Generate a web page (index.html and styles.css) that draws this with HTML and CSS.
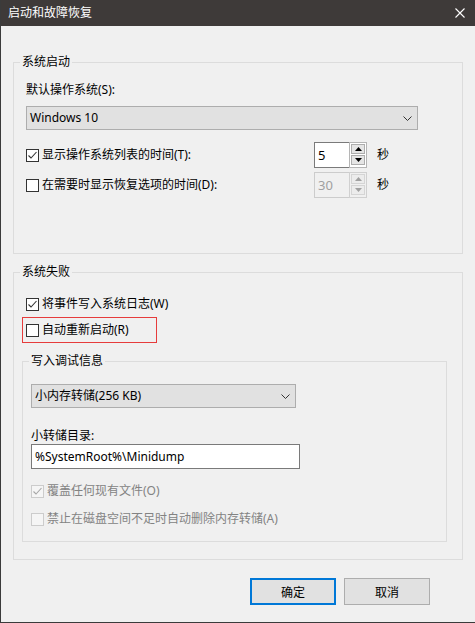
FILE: index.html
```html
<!DOCTYPE html>
<html lang="zh-CN">
<head>
<meta charset="utf-8">
<title>启动和故障恢复</title>
<link rel="stylesheet" href="styles.css">
</head>
<body>
<div class="window">
  <div class="titlebar">
    <span class="title">启动和故障恢复</span>
    <svg class="close" width="10" height="10" viewBox="0 0 10 10"><path d="M0.5 0.5 L9.5 9.5 M9.5 0.5 L0.5 9.5" stroke="#fff" stroke-width="1.1" fill="none"/></svg>
  </div>
  <div class="content">
    <fieldset class="group group-startup">
      <legend class="legend legend-wide">系统启动</legend>
      <div class="label">默认操作系统(S):</div>
      <div class="select select-os">
        <span>Windows 10</span>
        <svg class="chev" width="9" height="5" viewBox="0 0 9 5"><path d="M0.5 0.5 L4.5 4.5 L8.5 0.5" stroke="#333" stroke-width="1" fill="none"/></svg>
      </div>
      <div class="spin-row">
        <div class="check-row">
          <span class="cb"><svg width="11" height="11" viewBox="0 0 11 11"><path d="M1.5 5.5 L4 8 L9.5 2" stroke="#333" stroke-width="1.1" fill="none"/></svg></span>
          <span>显示操作系统列表的时间(T):</span>
        </div>
        <div class="spin">
          <div class="spin-field">5</div>
          <div class="spin-btns">
            <span class="spin-btn"><svg width="7" height="4" viewBox="0 0 7 4"><path d="M0 4 L3.5 0 L7 4 Z" fill="#000"/></svg></span>
            <span class="spin-btn"><svg width="7" height="4" viewBox="0 0 7 4"><path d="M0 0 L7 0 L3.5 4 Z" fill="#000"/></svg></span>
          </div>
        </div>
        <span>秒</span>
      </div>
      <div class="spin-row spin-row-second">
        <div class="check-row">
          <span class="cb"></span>
          <span>在需要时显示恢复选项的时间(D):</span>
        </div>
        <div class="spin spin-disabled">
          <div class="spin-field">30</div>
          <div class="spin-btns">
            <span class="spin-btn"><svg width="7" height="4" viewBox="0 0 7 4"><path d="M0 4 L3.5 0 L7 4 Z" fill="#a0a0a0"/></svg></span>
            <span class="spin-btn"><svg width="7" height="4" viewBox="0 0 7 4"><path d="M0 0 L7 0 L3.5 4 Z" fill="#a0a0a0"/></svg></span>
          </div>
        </div>
        <span>秒</span>
      </div>
    </fieldset>

    <fieldset class="group group-failure">
      <legend class="legend">系统失败</legend>
      <div class="check-row indent">
        <span class="cb"><svg width="11" height="11" viewBox="0 0 11 11"><path d="M1.5 5.5 L4 8 L9.5 2" stroke="#333" stroke-width="1.1" fill="none"/></svg></span>
        <span>将事件写入系统日志(W)</span>
      </div>
      <div class="highlight">
        <div class="check-row">
          <span class="cb"></span>
          <span>自动重新启动(R)</span>
        </div>
      </div>
      <fieldset class="group group-debug">
        <legend class="legend">写入调试信息</legend>
        <div class="select select-dump">
          <span>小内存转储(256 KB)</span>
          <svg class="chev" width="9" height="5" viewBox="0 0 9 5"><path d="M0.5 0.5 L4.5 4.5 L8.5 0.5" stroke="#333" stroke-width="1" fill="none"/></svg>
        </div>
        <div class="label label-dir">小转储目录:</div>
        <div class="textbox">%SystemRoot%\Minidump</div>
        <div class="check-row disabled row-overwrite">
          <span class="cb cb-disabled"><svg width="11" height="11" viewBox="0 0 11 11"><path d="M1.5 5.5 L4 8 L9.5 2" stroke="#a6a6a6" stroke-width="1.1" fill="none"/></svg></span>
          <span>覆盖任何现有文件(O)</span>
        </div>
        <div class="check-row disabled row-delete">
          <span class="cb cb-disabled"></span>
          <span>禁止在磁盘空间不足时自动删除内存转储(A)</span>
        </div>
      </fieldset>
    </fieldset>

    <div class="buttons">
      <button class="btn btn-default" type="button">确定</button>
      <button class="btn" type="button">取消</button>
    </div>
  </div>
</div>
</body>
</html>
```

FILE: styles.css
```css
* {
  box-sizing: border-box;
}

html, body {
  margin: 0;
  padding: 0;
  background: #f0f0f0;
}

body {
  font-family: "Noto Sans", "Noto Sans CJK SC", sans-serif;
  font-size: 12px;
  line-height: 16px;
  color: #000;
}

.window {
  width: 475px;
  height: 623px;
  border-left: 1px solid #3b3b3b;
  border-bottom: 1px solid #3b3b3b;
  display: flex;
  flex-direction: column;
  overflow: hidden;
}

.titlebar {
  height: 26px;
  flex: none;
  background: #3e3a39;
  color: #fff;
  display: flex;
  align-items: center;
  justify-content: space-between;
  padding: 0 10px 0 7px;
}

.title {
  font-size: 12px;
}

.close {
  display: block;
}

.content {
  padding: 28px 12px 0 12px;
  display: flex;
  flex-direction: column;
}

.group {
  margin: 0;
  border: 1px solid #dcdcdc;
  min-width: 0;
}

.legend {
  padding: 0 2px;
  margin-left: -2px;
  line-height: 16px;
}

.legend-wide {
  margin-left: -6px;
}

.group-startup {
  padding: 12px 12px 55px 12px;
}

.label {
  line-height: 16px;
}

.select {
  margin-top: 8px;
  height: 24px;
  background: #e1e1e1;
  border: 1px solid #adadad;
  display: flex;
  align-items: center;
  justify-content: space-between;
  padding: 0 5px 0 3px;
}

.select-os {
  width: 392px;
}

.chev {
  display: block;
}

.spin-row {
  margin-top: 12px;
  height: 26px;
  display: grid;
  grid-template-columns: 278px 53px auto;
  column-gap: 10px;
  align-items: center;
}

.spin-row-second {
  margin-top: 4px;
}

.check-row {
  display: flex;
  align-items: center;
  gap: 3px;
  height: 16px;
  white-space: nowrap;
}

.cb {
  width: 13px;
  height: 13px;
  flex: none;
  border: 1px solid #333;
  background: #fff;
  display: flex;
  align-items: center;
  justify-content: center;
}

.cb svg {
  display: block;
}

.cb-disabled {
  border-color: #cccccc;
  background: #f5f5f5;
}

.disabled {
  color: #838383;
}

.spin {
  display: flex;
  height: 26px;
}

.spin-field {
  flex: 1;
  background: #fff;
  border: 1px solid #7a7a7a;
  border-right: none;
  padding: 0 3px;
  font-size: 13px;
  display: flex;
  align-items: center;
}

.spin-btns {
  width: 18px;
  border: 1px solid #b5b5b5;
  padding: 1px 1px 2px 1px;
  display: flex;
  flex-direction: column;
  gap: 1px;
  background: #fff;
}

.spin-btn {
  flex: 1;
  background: #e5e5e5;
  border: 1px solid #adadad;
  display: flex;
  align-items: center;
  justify-content: center;
}

.spin-btn svg {
  display: block;
}

.spin-disabled .spin-field {
  background: #f0f0f0;
  border-color: #cccccc;
  color: #a0a0a0;
}

.spin-disabled .spin-btns {
  border-color: #d0d0d0;
  background: #f0f0f0;
}

.spin-disabled .spin-btn {
  background: #ececec;
  border-color: #d5d5d5;
}

.group-failure {
  margin-top: 10px;
  padding: 16px 15px 17px 8px;
}

.indent {
  padding-left: 4px;
}

.highlight {
  margin-top: 5px;
  width: 135px;
  height: 26px;
  border: 1px solid #e63c3c;
  padding-left: 3px;
  display: flex;
  align-items: center;
}

.group-debug {
  margin-top: 10px;
  padding: 15px 8px 14px 8px;
}

.group-debug .select {
  margin-top: 0;
}

.select-dump {
  width: 265px;
}

.label-dir {
  margin-top: 20px;
}

.textbox {
  width: 269px;
  height: 25px;
  background: #fff;
  border: 1px solid #7a7a7a;
  padding: 0 3px;
  font-size: 12px;
  display: flex;
  align-items: center;
}

.row-overwrite {
  margin-top: 14px;
}

.row-delete {
  margin-top: 12px;
}

.buttons {
  margin-top: 18px;
  display: flex;
  justify-content: flex-end;
  gap: 8px;
  padding-right: 33px;
}

.btn {
  width: 86px;
  height: 27px;
  margin: 0;
  background: #e1e1e1;
  border: 1px solid #adadad;
  font-family: "Noto Sans", "Noto Sans CJK SC", sans-serif;
  font-size: 12px;
  color: #000;
  padding: 0;
}

.btn-default {
  border: 2px solid #0078d7;
}
```
